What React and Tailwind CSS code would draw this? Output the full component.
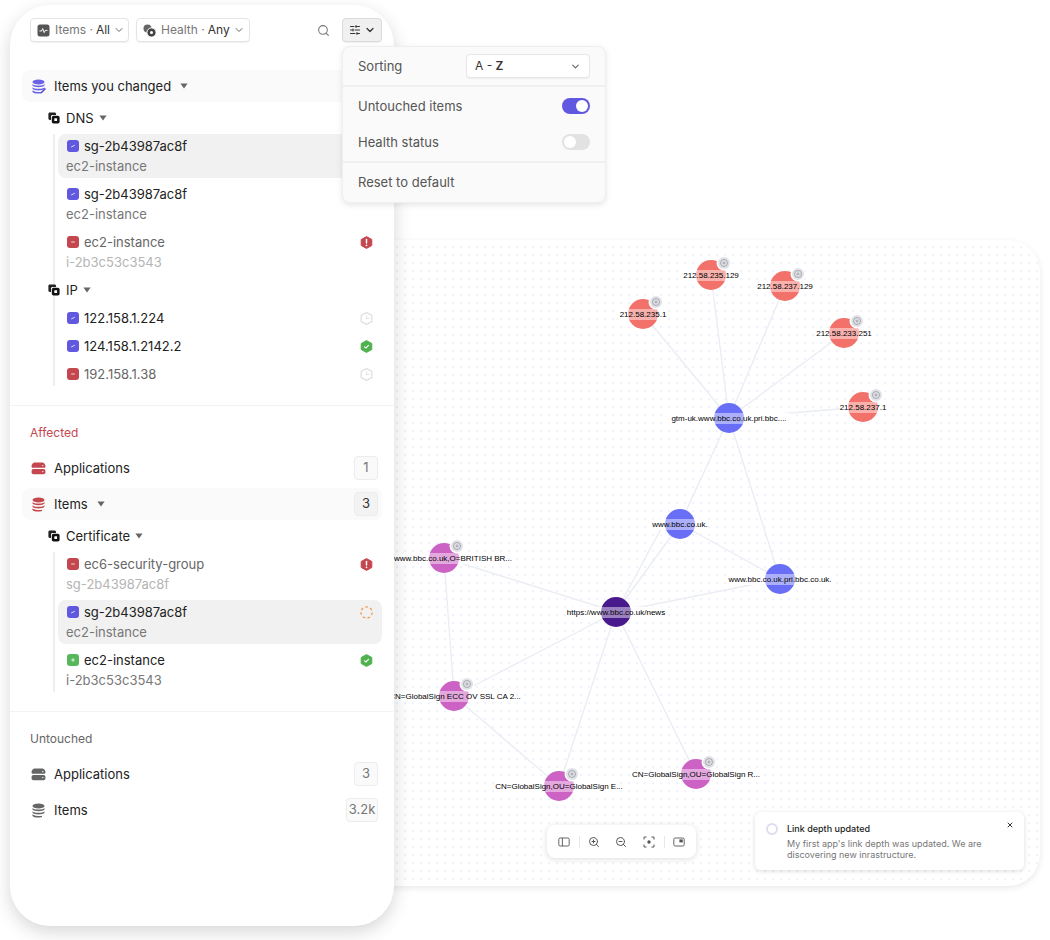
import React from "react";
import { ChevronDown, Search, SlidersHorizontal, ZoomIn, ZoomOut, X } from "lucide-react";

const RED = "#f2726b";
const BLUE = "#686ff6";
const PINK = "#cc62c4";
const DARK = "#491a8b";

const nodes = [
  { id: "a", x: 711, y: 275, color: RED, label: "212.58.235.129", badge: true },
  { id: "b", x: 785, y: 286, color: RED, label: "212.58.237.129", badge: true },
  { id: "c", x: 643, y: 314, color: RED, label: "212.58.235.1", badge: true },
  { id: "d", x: 844, y: 333, color: RED, label: "212.58.233.251", badge: true },
  { id: "e", x: 863, y: 407, color: RED, label: "212.58.237.1", badge: true },
  { id: "hub", x: 729, y: 418, color: BLUE, label: "gtm-uk.www.bbc.co.uk.pri.bbc...." },
  { id: "bbc", x: 680, y: 524, color: BLUE, label: "www.bbc.co.uk." },
  { id: "pri", x: 780, y: 579, color: BLUE, label: "www.bbc.co.uk.pri.bbc.co.uk." },
  { id: "news", x: 616, y: 612, color: DARK, label: "https://www.bbc.co.uk/news" },
  { id: "cert", x: 444, y: 558, color: PINK, label: "www.bbc.co.uk,O=BRITISH BR...", badge: true, labelX: 453 },
  { id: "ecc", x: 454, y: 696, color: PINK, label: "CN=GlobalSign ECC OV SSL CA 2...", badge: true, labelX: 455 },
  { id: "ou1", x: 559, y: 786, color: PINK, label: "CN=GlobalSign,OU=GlobalSign E...", badge: true },
  { id: "ou2", x: 696, y: 774, color: PINK, label: "CN=GlobalSign,OU=GlobalSign R...", badge: true },
];

const edges = [
  ["hub", "a"], ["hub", "b"], ["hub", "c"], ["hub", "d"], ["hub", "e"],
  ["hub", "bbc"], ["hub", "pri"], ["news", "bbc"], ["news", "pri"],
  ["bbc", "pri"], ["news", "cert"], ["news", "ecc"], ["news", "ou1"], ["news", "ou2"],
  ["cert", "ecc"], ["ecc", "ou1"],
];

const nodeById = (id) => nodes.find((n) => n.id === id);

// Little square marking how an item changed
const ChangeIcon = ({ type }) => {
  const bg = { changed: "bg-[#6058de]", removed: "bg-[#c4474f]", added: "bg-[#56b85a]" }[type];
  return (
    <span className={`flex h-3 w-3 shrink-0 items-center justify-center rounded-[3px] ${bg}`}>
      <svg width="8" height="8" viewBox="0 0 8 8" fill="none" stroke="white" strokeWidth="0.9" strokeLinecap="round" opacity="0.9">
        {type === "changed" && <path d="M2.6 4.8 L5.4 3.4" />}
        {type === "removed" && <path d="M2.6 4 H5.4" />}
        {type === "added" && <path d="M2.6 4 H5.4 M4 2.6 V5.4" />}
      </svg>
    </span>
  );
};

const HEX = "M6.5 .6 L11.8 3.5 V9.5 L6.5 12.4 L1.2 9.5 V3.5 Z";

const StatusIcon = ({ type }) => {
  if (type === "error") {
    return (
      <svg width="13" height="13" viewBox="0 0 13 13">
        <path d={HEX} fill="#c4474f" stroke="#c4474f" strokeLinejoin="round" />
        <path d="M6.5 3.4 V7" stroke="white" strokeWidth="1.5" strokeLinecap="round" />
        <circle cx="6.5" cy="9.3" r=".85" fill="white" />
      </svg>
    );
  }
  if (type === "ok") {
    return (
      <svg width="13" height="13" viewBox="0 0 13 13" fill="none">
        <path d={HEX} fill="#4fb24f" stroke="#4fb24f" strokeLinejoin="round" />
        <path d="M4.5 6.8 L5.9 8 L8.5 5.3" stroke="white" strokeWidth="1.1" strokeLinecap="round" strokeLinejoin="round" />
      </svg>
    );
  }
  if (type === "pending") {
    return (
      <svg width="13" height="13" viewBox="0 0 13 13" fill="none" stroke="#e0e0e0" strokeWidth="1.3">
        <path d={HEX} strokeLinejoin="miter" />
        <path d="M6.5 3.4 V6.5 H9.6" strokeWidth="0.9" />
      </svg>
    );
  }
  return (
    <svg width="13" height="13" viewBox="0 0 13 13" fill="none">
      <circle cx="6.5" cy="6.5" r="5.6" stroke="#ee9c55" strokeWidth="1.3" strokeDasharray="2.6 2.3" />
    </svg>
  );
};

const StackIcon = ({ color, pen }) => (
  <svg width="15" height="15" viewBox="0 0 15 15" fill={color}>
    <ellipse cx="7.5" cy="3" rx="6" ry="2.6" />
    <path d="M1.5 5 C3 7 12 7 13.5 5 V6.6 C12 8.8 3 8.8 1.5 6.6 Z" />
    <path d="M1.5 8.2 C3 10.2 12 10.2 13.5 8.2 V9.8 C12 12 3 12 1.5 9.8 Z" />
    <path d="M1.5 11.2 C3 13.2 10 13.3 11 12.8 V14 C8 15 3 14.9 1.5 12.9 Z" />
    {pen && <path d="M10 13 L14 9 L15 10 L11 14 L9.6 14.4 Z" fill="#4f46c9" />}
  </svg>
);

const ServerIcon = ({ color }) => (
  <svg width="15" height="15" viewBox="0 0 15 15" fill={color}>
    <path d="M3.4 1.6 H11.6 C12.6 1.6 13.6 2.6 14.4 4.4 V5.4 C14.4 6.2 14 6.8 13.2 6.8 H1.8 C1 6.8 .6 6.2 .6 5.4 V4.4 C1.4 2.6 2.4 1.6 3.4 1.6 Z" />
    <rect x=".6" y="8" width="13.8" height="5.2" rx="1.8" />
    <circle cx="11.8" cy="10.6" r=".7" fill="white" />
    <circle cx="11.8" cy="4.6" r=".7" fill="white" />
  </svg>
);

const GroupIcon = () => (
  <svg width="12" height="12" viewBox="0 0 12 12" className="shrink-0">
    <path d="M1.8 0.4 H6.6 C7.4 0.4 8 1 8 1.8 V3 H4.5 C3.6 3 3 3.6 3 4.5 V8 H1.8 C1 8 .4 7.4 .4 6.6 V1.8 C.4 1 1 .4 1.8 .4 Z" fill="#222" />
    <rect x="3.8" y="3.8" width="7.8" height="7.8" rx="1.8" fill="#111" />
    <rect x="6.3" y="6.3" width="2.8" height="2.8" rx=".5" fill="white" />
  </svg>
);

const Caret = ({ className = "" }) => (
  <svg width="8" height="6" viewBox="0 0 8 6" className={className}>
    <path d="M0.4 0.4 H7.6 L4 5.6 Z" fill="#666" />
  </svg>
);

const Count = ({ children, dark, wide }) => (
  <span
    className={`flex h-6 items-center justify-center rounded border border-[#ececec] text-[13px] ${
      wide ? "w-8" : "w-6"
    } ${dark ? "bg-[#f3f3f3] text-[#333]" : "bg-[#fafafa] text-[#777]"}`}
  >
    {children}
  </span>
);

const TwoLineRow = ({ type, title, sub, status, active, muted, faintSub }) => (
  <div className={`relative mb-1 ml-[3px] h-11 rounded-lg pl-[9px] pr-[9px] ${active ? "bg-[#f1f1f1]" : ""}`}>
    <div className="flex h-6 items-center">
      <ChangeIcon type={type} />
      <span className={`ml-[5px] translate-y-px text-[13px] ${muted ? "text-[#666]" : "text-[#222]"}`}>{title}</span>
      {status && (
        <span className="ml-auto flex">
          <StatusIcon type={status} />
        </span>
      )}
    </div>
    <div className={`-ml-px mt-[-4px] h-6 text-[13px] leading-6 ${faintSub ? "text-[#b5b5b5]" : "text-[#777]"}`}>{sub}</div>
  </div>
);

const IpRow = ({ type, title, status, muted }) => (
  <div className="ml-[3px] flex h-7 items-center pl-[9px] pr-[9px]">
    <ChangeIcon type={type} />
    <span className={`ml-[5px] translate-y-px text-[13px] ${muted ? "text-[#666]" : "text-[#222]"}`}>{title}</span>
    <span className="ml-auto flex">
      <StatusIcon type={status} />
    </span>
  </div>
);

const GroupHeader = ({ label }) => (
  <div className="flex h-8 items-center pl-[26px]">
    <GroupIcon />
    <span className="ml-1.5 translate-y-px text-[13px] text-[#222]">{label}</span>
    <Caret className="ml-[5px]" />
  </div>
);

const Sidebar = () => (
  <aside className="relative z-10 ml-[10px] mt-[5px] h-[921px] w-[384px] rounded-[40px] bg-white pt-[13px] shadow-[0_6px_18px_rgba(0,0,0,0.16)]">
    <div className="flex h-6 items-center pl-5 pr-3">
      <button className="flex h-6 w-[99px] items-center rounded border border-[#e4e4e4] pl-1.5 text-xs shadow-[0_1px_1px_rgba(0,0,0,0.06)]">
        <svg width="13" height="13" viewBox="0 0 13 13" className="shrink-0">
          <rect x=".5" y=".5" width="12" height="12" rx="2.5" fill="#555" />
          <path d="M2.5 7 H4.6 L5.7 4.6 L7.2 8.6 L8.3 6.4 H10.5" fill="none" stroke="white" strokeWidth="1" />
        </svg>
        <span className="ml-[5px] text-[#777]">Items ·</span>
        <span className="ml-[3px] text-[#333]">All</span>
        <ChevronDown size={12} className="ml-[3px] text-[#666]" />
      </button>
      <button className="ml-[7px] flex h-6 w-[114px] items-center rounded border border-[#e4e4e4] pl-1.5 text-xs shadow-[0_1px_1px_rgba(0,0,0,0.06)]">
        <svg width="13" height="13" viewBox="0 0 13 13" className="shrink-0">
          <circle cx="4.5" cy="4.5" r="4" fill="#666" />
          <circle cx="8.5" cy="8.5" r="4.6" fill="#444" stroke="white" />
          <circle cx="8.5" cy="8.5" r="1.5" fill="white" />
        </svg>
        <span className="ml-[5px] text-[#777]">Health ·</span>
        <span className="ml-[3px] text-[#333]">Any</span>
        <ChevronDown size={12} className="ml-[3px] text-[#666]" />
      </button>
      <Search size={13} className="ml-auto text-[#777]" />
      <button className="ml-3 flex h-6 w-10 items-center justify-center gap-[3px] rounded border border-[#dcdcdc] bg-[#f0f0f0] shadow-[0_1px_1px_rgba(0,0,0,0.06)]">
        <SlidersHorizontal size={12} className="text-[#333]" />
        <ChevronDown size={12} strokeWidth={2.5} className="text-[#333]" />
      </button>
    </div>

    <div className="mt-7 px-3">
      <div className="flex h-8 items-center rounded-lg bg-[#fafafa] pl-[9px]">
        <StackIcon color="#6a63e6" pen />
        <span className="ml-2 translate-y-px text-[13px] text-[#222]">Items you changed</span>
        <Caret className="ml-[9px]" />
      </div>
      <GroupHeader label="DNS" />
      <div className="ml-[31px] h-[252px] border-l-2 border-[#eeeeee]">
        <TwoLineRow type="changed" title="sg-2b43987ac8f" sub="ec2-instance" active />
        <TwoLineRow type="changed" title="sg-2b43987ac8f" sub="ec2-instance" />
        <TwoLineRow type="removed" title="ec2-instance" sub="i-2b3c53c3543" status="error" muted faintSub />
        <div className="-ml-[7px] mb-0.5 flex h-6 items-center">
          <GroupIcon />
          <span className="ml-1.5 translate-y-px text-[13px] text-[#222]">IP</span>
          <Caret className="ml-[5px]" />
        </div>
        <IpRow type="changed" title="122.158.1.224" status="pending" />
        <IpRow type="changed" title="124.158.1.2142.2" status="ok" />
        <IpRow type="removed" title="192.158.1.38" status="pending" muted />
      </div>
    </div>

    <div className="mt-[19px] border-t border-[#f3f3f3] px-3 pt-[19px]">
      <div className="h-4 pl-2 text-xs leading-4 text-[#c4474f]">Affected</div>
      <div className="mt-[15px] flex h-6 items-center pl-[9px] pr-1">
        <ServerIcon color="#c4474f" />
        <span className="ml-2 translate-y-px text-[13px] text-[#222]">Applications</span>
        <span className="ml-auto">
          <Count>1</Count>
        </span>
      </div>
      <div className="mt-2 flex h-8 items-center rounded-lg bg-[#fafafa] pl-[9px] pr-1">
        <StackIcon color="#c4474f" />
        <span className="ml-2 translate-y-px text-[13px] text-[#222]">Items</span>
        <Caret className="ml-[9px]" />
        <span className="ml-auto">
          <Count dark>3</Count>
        </span>
      </div>
      <GroupHeader label="Certificate" />
      <div className="ml-[31px] h-[140px] border-l-2 border-[#eeeeee]">
        <TwoLineRow type="removed" title="ec6-security-group" sub="sg-2b43987ac8f" status="error" muted faintSub />
        <TwoLineRow type="changed" title="sg-2b43987ac8f" sub="ec2-instance" status="loading" active />
        <TwoLineRow type="added" title="ec2-instance" sub="i-2b3c53c3543" status="ok" />
      </div>
    </div>

    <div className="mt-[19px] border-t border-[#f3f3f3] px-3 pt-[19px]">
      <div className="h-4 pl-2 text-xs leading-4 text-[#666]">Untouched</div>
      <div className="mt-[15px] flex h-6 items-center pl-[9px] pr-1">
        <ServerIcon color="#666" />
        <span className="ml-2 translate-y-px text-[13px] text-[#222]">Applications</span>
        <span className="ml-auto">
          <Count>3</Count>
        </span>
      </div>
      <div className="mt-3 flex h-6 items-center pl-[9px] pr-1">
        <StackIcon color="#666" />
        <span className="ml-2 translate-y-px text-[13px] text-[#222]">Items</span>
        <span className="ml-auto">
          <Count wide>3.2k</Count>
        </span>
      </div>
    </div>
  </aside>
);

const SettingsMenu = () => (
  <div className="absolute left-[342px] top-[46px] z-20 w-[264px] rounded-lg border border-[#efefef] bg-[#fafafa] text-[13px] text-[#555] shadow-[0_2px_6px_rgba(0,0,0,0.1)]">
    <div className="flex h-[40px] items-center justify-between border-b-2 border-[#f0f0f0] pl-[15px] pr-[15px]">
      <span className="translate-y-px">Sorting</span>
      <div className="flex h-6 w-[124px] items-center justify-between rounded border border-[#e6e6e6] bg-white pl-2 pr-2 text-xs text-[#333] shadow-[0_1px_1px_rgba(0,0,0,0.05)]">
        <span>
          A - <span className="font-semibold">Z</span>
        </span>
        <ChevronDown size={11} strokeWidth={2.5} className="text-[#666]" />
      </div>
    </div>
    <div className="flex h-[38px] items-center justify-between pl-[15px] pr-[15px]">
      <span className="translate-y-px">Untouched items</span>
      <span className="flex h-4 w-7 items-center justify-end rounded-full bg-[#6058de] pr-0.5">
        <span className="h-3 w-3 rounded-full bg-white" />
      </span>
    </div>
    <div className="flex h-[38px] items-center justify-between border-b-2 border-[#f0f0f0] pb-0.5 pl-[15px] pr-[15px]">
      <span className="translate-y-px">Health status</span>
      <span className="flex h-4 w-7 items-center rounded-full bg-[#e2e2e2] pl-0.5">
        <span className="h-3 w-3 rounded-full bg-white" />
      </span>
    </div>
    <div className="flex h-[39px] items-center pl-[15px]">Reset to default</div>
  </div>
);

const GraphNode = ({ node }) => {
  const { x, y, color, label, badge, labelX } = node;
  const textX = labelX || x;
  const labelWidth = label.length * 3.8;
  return (
    <g>
      {/* the label's backing hides the edges that pass under it */}
      <rect x={textX - labelWidth / 2} y={y - 5} width={labelWidth} height="11" fill="white" />
      <circle cx={x} cy={y} r="15" fill={color} />
      {badge && (
        <g>
          <circle cx={x + 13} cy={y - 12} r="7.5" fill="white" />
          <circle cx={x + 13} cy={y - 12} r="6" fill="#e1e2e7" />
          <circle cx={x + 13} cy={y - 12} r="3.5" fill="none" stroke="#8f9096" strokeWidth=".7" />
          <path d={`M${x + 11.5} ${y - 12} h3 M${x + 13} ${y - 13.5} v3`} stroke="#8f9096" strokeWidth=".7" />
        </g>
      )}
      <rect x={x - 15} y={y - 5} width="30" height="11" fill="white" opacity="0.45" />
      <text
        x={textX}
        y={y + 3.4}
        textAnchor="middle"
        fontSize="8"
        fill="#000"
        fontFamily="'Liberation Sans', Arial, sans-serif"
      >
        {label}
      </text>
    </g>
  );
};

const GraphCanvas = () => (
  <div className="absolute left-[300px] top-[240px] h-[646px] w-[740px] overflow-hidden rounded-[32px] bg-white bg-[radial-gradient(circle,#e6ecfd_0.6px,transparent_0.9px)] bg-[size:8px_8px] bg-[position:-3px_3px] shadow-[0_2px_6px_rgba(0,0,0,0.09)]">
    <svg width="740" height="646" viewBox="300 240 740 646" className="absolute left-0 top-0">
      {edges.map(([from, to]) => {
        const a = nodeById(from);
        const b = nodeById(to);
        return <line key={from + to} x1={a.x} y1={a.y} x2={b.x} y2={b.y} stroke="#ebedf3" strokeWidth="1.4" />;
      })}
      <line x1="616" y1="612" x2="668" y2="516" stroke="#ebedf3" strokeWidth="1.4" />
      {nodes.map((node) => (
        <GraphNode key={node.id} node={node} />
      ))}
    </svg>
  </div>
);

const MapToolbar = () => (
  <div className="absolute left-[547px] top-[825px] z-10 flex h-[33px] w-[149px] items-center rounded-lg bg-white pl-[11px] text-[#555] shadow-[0_1px_6px_rgba(0,0,0,0.14)]">
    <svg width="12" height="12" viewBox="0 0 12 12" fill="none" stroke="currentColor" strokeWidth="0.9">
      <rect x=".8" y="2" width="10.4" height="8" rx="1.4" />
      <path d="M4.4 2 V10" />
    </svg>
    <span className="ml-[9px] h-3 w-px bg-[#e8e8e8]" />
    <ZoomIn size={12} className="ml-[8px]" />
    <ZoomOut size={12} className="ml-[15px]" />
    <svg width="12" height="12" viewBox="0 0 12 12" fill="none" stroke="currentColor" className="ml-[16px]">
      <path d="M1 3.5 V1 H3.5 M8.5 1 H11 V3.5 M11 8.5 V11 H8.5 M3.5 11 H1 V8.5" />
      <circle cx="6" cy="6" r="1.7" fill="currentColor" stroke="none" />
    </svg>
    <span className="ml-[9px] h-3 w-px bg-[#e8e8e8]" />
    <svg width="12" height="12" viewBox="0 0 12 12" fill="none" stroke="currentColor" strokeWidth="0.9" className="ml-[8px]">
      <rect x=".8" y="2" width="10.4" height="8" rx="1.4" />
      <rect x="6.4" y="3.4" width="3.4" height="3" fill="currentColor" stroke="none" />
    </svg>
  </div>
);

const Toast = () => (
  <div className="absolute left-[755px] top-[812px] z-10 h-[58px] w-[269px] rounded-md bg-white pl-[32px] pt-[11px] shadow-[0_1px_5px_rgba(0,0,0,0.14)]">
    <span className="absolute left-[11px] top-[11px] h-3 w-3 rounded-full border-2 border-[#e0dcef]" />
    <X size={8} strokeWidth={3} className="absolute right-[10px] top-[9px] text-[#333]" />
    <div className="text-[9px] font-medium leading-3 text-[#222]">Link depth updated</div>
    <div className="mt-[3px] w-[220px] text-[9px] leading-[11px] text-[#777]">
      My first app's link depth was updated. We are discovering new inrastructure.
    </div>
  </div>
);

const App = () => {
  return (
    <div className="relative h-[940px] w-[1050px] overflow-hidden bg-white font-['Inter',sans-serif]">
      <GraphCanvas />
      <MapToolbar />
      <Toast />
      <Sidebar />
      <SettingsMenu />
    </div>
  );
};

export default App;
